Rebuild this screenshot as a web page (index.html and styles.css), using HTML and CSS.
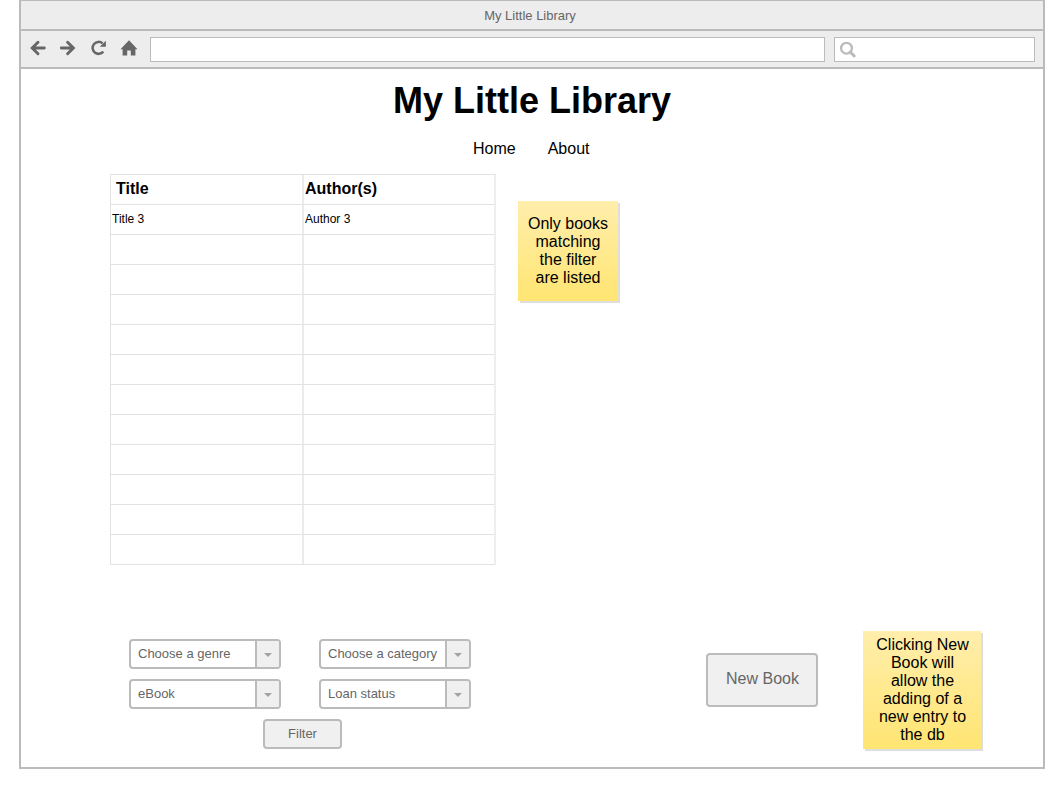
FILE: index.html
```html
<!DOCTYPE html>
<html lang="en">
<head>
<meta charset="utf-8">
<title>My Little Library</title>
<link rel="stylesheet" href="styles.css">
</head>
<body>
<div class="window">
  <div class="titlebar">My Little Library</div>
  <div class="toolbar">
    <div class="nav-icons">
      <svg class="icon" viewBox="0 0 20 20"><path d="M16.3 10H5M10 4.2L4.2 10l5.8 5.8" fill="none" stroke="#666" stroke-width="2.9" stroke-linecap="round"/></svg>
      <svg class="icon" viewBox="0 0 20 20"><path d="M3.3 10H14.6M9.6 4.2l5.8 5.8-5.8 5.8" fill="none" stroke="#666" stroke-width="2.9" stroke-linecap="round"/></svg>
      <svg class="icon" viewBox="0 0 20 20"><path d="M14.3 13.6A6 6 0 1 1 13.6 5.4" fill="none" stroke="#666" stroke-width="2.5"/><path d="M16.9 2.8v5.9H10.8z" fill="#666"/></svg>
      <svg class="icon" viewBox="0 0 20 20"><path d="M10 2.3L1.5 11.2H3.6V17.5H8.2V12.4h3.6v5.1h4.6v-6.3h2.1z" fill="#666"/></svg>
    </div>
    <div class="address"></div>
    <div class="search">
      <svg class="search-icon" viewBox="0 0 18 18"><circle cx="7.5" cy="7.2" r="5.4" fill="none" stroke="#bbb" stroke-width="2.3"/><path d="M11.2 11l4 4" stroke="#bbb" stroke-width="3" stroke-linecap="round"/></svg>
    </div>
  </div>
  <main class="page">
    <h1 class="heading">My Little Library</h1>
    <nav class="menu"><span>Home</span><span>About</span></nav>
    <section class="listing">
      <div class="table">
        <div class="row head"><div class="cell">Title</div><div class="cell">Author(s)</div></div>
        <div class="row"><div class="cell">Title 3</div><div class="cell">Author 3</div></div>
        <div class="row"><div class="cell"></div><div class="cell"></div></div>
        <div class="row"><div class="cell"></div><div class="cell"></div></div>
        <div class="row"><div class="cell"></div><div class="cell"></div></div>
        <div class="row"><div class="cell"></div><div class="cell"></div></div>
        <div class="row"><div class="cell"></div><div class="cell"></div></div>
        <div class="row"><div class="cell"></div><div class="cell"></div></div>
        <div class="row"><div class="cell"></div><div class="cell"></div></div>
        <div class="row"><div class="cell"></div><div class="cell"></div></div>
        <div class="row"><div class="cell"></div><div class="cell"></div></div>
        <div class="row"><div class="cell"></div><div class="cell"></div></div>
        <div class="row"><div class="cell"></div><div class="cell"></div></div>
      </div>
      <div class="note note-filter">Only books<br>matching<br>the filter<br>are listed</div>
    </section>
    <section class="controls">
      <div class="filters">
        <div class="select"><span class="value">Choose a genre</span><span class="arrow"></span></div>
        <div class="select"><span class="value">Choose a category</span><span class="arrow"></span></div>
        <div class="select"><span class="value">eBook</span><span class="arrow"></span></div>
        <div class="select"><span class="value">Loan status</span><span class="arrow"></span></div>
        <div class="button filter-button">Filter</div>
      </div>
      <div class="button new-button">New Book</div>
      <div class="note note-new">Clicking New<br>Book will<br>allow the<br>adding of a<br>new entry to<br>the db</div>
    </section>
  </main>
</div>
</body>
</html>
```
FILE: styles.css
```css
* { box-sizing: border-box; }
body {
  margin: 0;
  background: #fff;
  font-family: "Liberation Sans", Arial, sans-serif;
  color: #000;
}
.window {
  width: 1026px;
  height: 769px;
  margin-left: 19px;
  border: 2px solid #bbb;
  border-top-width: 1px;
}
.titlebar {
  height: 30px;
  border-bottom: 2px solid #bbb;
  background: #ededed;
  color: #666;
  font-size: 13px;
  line-height: 29px;
  text-align: center;
  padding-right: 4px;
}
.toolbar {
  display: flex;
  height: 38px;
  border-bottom: 2px solid #bbb;
  background: #ededed;
  padding: 6px 8px 0 7px;
}
.nav-icons {
  display: flex;
  gap: 10.4px;
  width: 122px;
}
.icon {
  width: 20px;
  height: 20px;
  flex: none;
  margin-top: 1px;
}
.address, .search {
  height: 25px;
  border: 1px solid #bbb;
  background: #fff;
}
.address { width: 675px; margin-right: 9px; }
.search { width: 201px; padding: 3px 0 0 4px; }
.search-icon { display: block; width: 18px; height: 18px; }
.heading {
  margin: 11px 0 0;
  font-size: 36px;
  line-height: 42px;
  text-align: center;
}
.menu {
  display: flex;
  gap: 32px;
  margin: 18px 0 0 452px;
  font-size: 16px;
  line-height: 18px;
}
.listing {
  display: flex;
  margin: 16px 0 0 89px;
}
.table {
  width: 386px;
  border: 1px solid #e2e2e2;
  border-right: 2px solid #eee;
  border-bottom: 0;
}
.row {
  display: grid;
  grid-template-columns: 193px 1fr;
  height: 30px;
  border-bottom: 1px solid #e2e2e2;
  font-size: 12px;
  line-height: 28px;
}
.cell { padding-left: 1px; }
.cell:first-child { border-right: 2px solid #ebebeb; }
.head { font-size: 16px; font-weight: bold; line-height: 27px; }
.head .cell:first-child { padding-left: 5px; }
.note {
  display: flex;
  align-items: center;
  justify-content: center;
  background: linear-gradient(#ffeeac, #ffe572);
  box-shadow: 2px 2px 0 #dedede;
  font-size: 16px;
  line-height: 18px;
  text-align: center;
}
.note-filter { width: 100px; height: 100px; margin: 26.5px 0 0 22px; }
.controls {
  display: flex;
  margin: 65px 0 0 108px;
}
.filters {
  display: grid;
  grid-template-columns: 152px 152px;
  grid-auto-rows: 30px;
  gap: 10px 38px;
  margin-top: 9px;
}
.select, .button {
  border: 2px solid #bbb;
  border-radius: 4px;
  color: #666;
  font-size: 13px;
}
.select {
  display: flex;
  overflow: hidden;
  background: #fff;
  line-height: 25px;
}
.value { flex: 1; padding-left: 7px; white-space: nowrap; }
.arrow {
  width: 24px;
  border-left: 2px solid #bbb;
  background: #f0f0f0;
}
.arrow::before {
  content: "";
  display: block;
  margin: 12px 0 0 7px;
  width: 0;
  border: 4.5px solid transparent;
  border-top: 4px solid #a3a3a3;
  border-bottom: 0;
}
.button {
  background: #f0f0f0;
  text-align: center;
}
.filter-button {
  grid-column: 1 / -1;
  width: 79px;
  margin-left: 134px;
  line-height: 25px;
}
.new-button {
  width: 112px;
  height: 54px;
  margin: 23px 45px 0 235px;
  font-size: 16px;
  line-height: 47px;
  padding-left: 1px;
}
.note-new { width: 118px; height: 118px; padding: 1px 0 0 1px; margin-top: 0.5px; }
```
